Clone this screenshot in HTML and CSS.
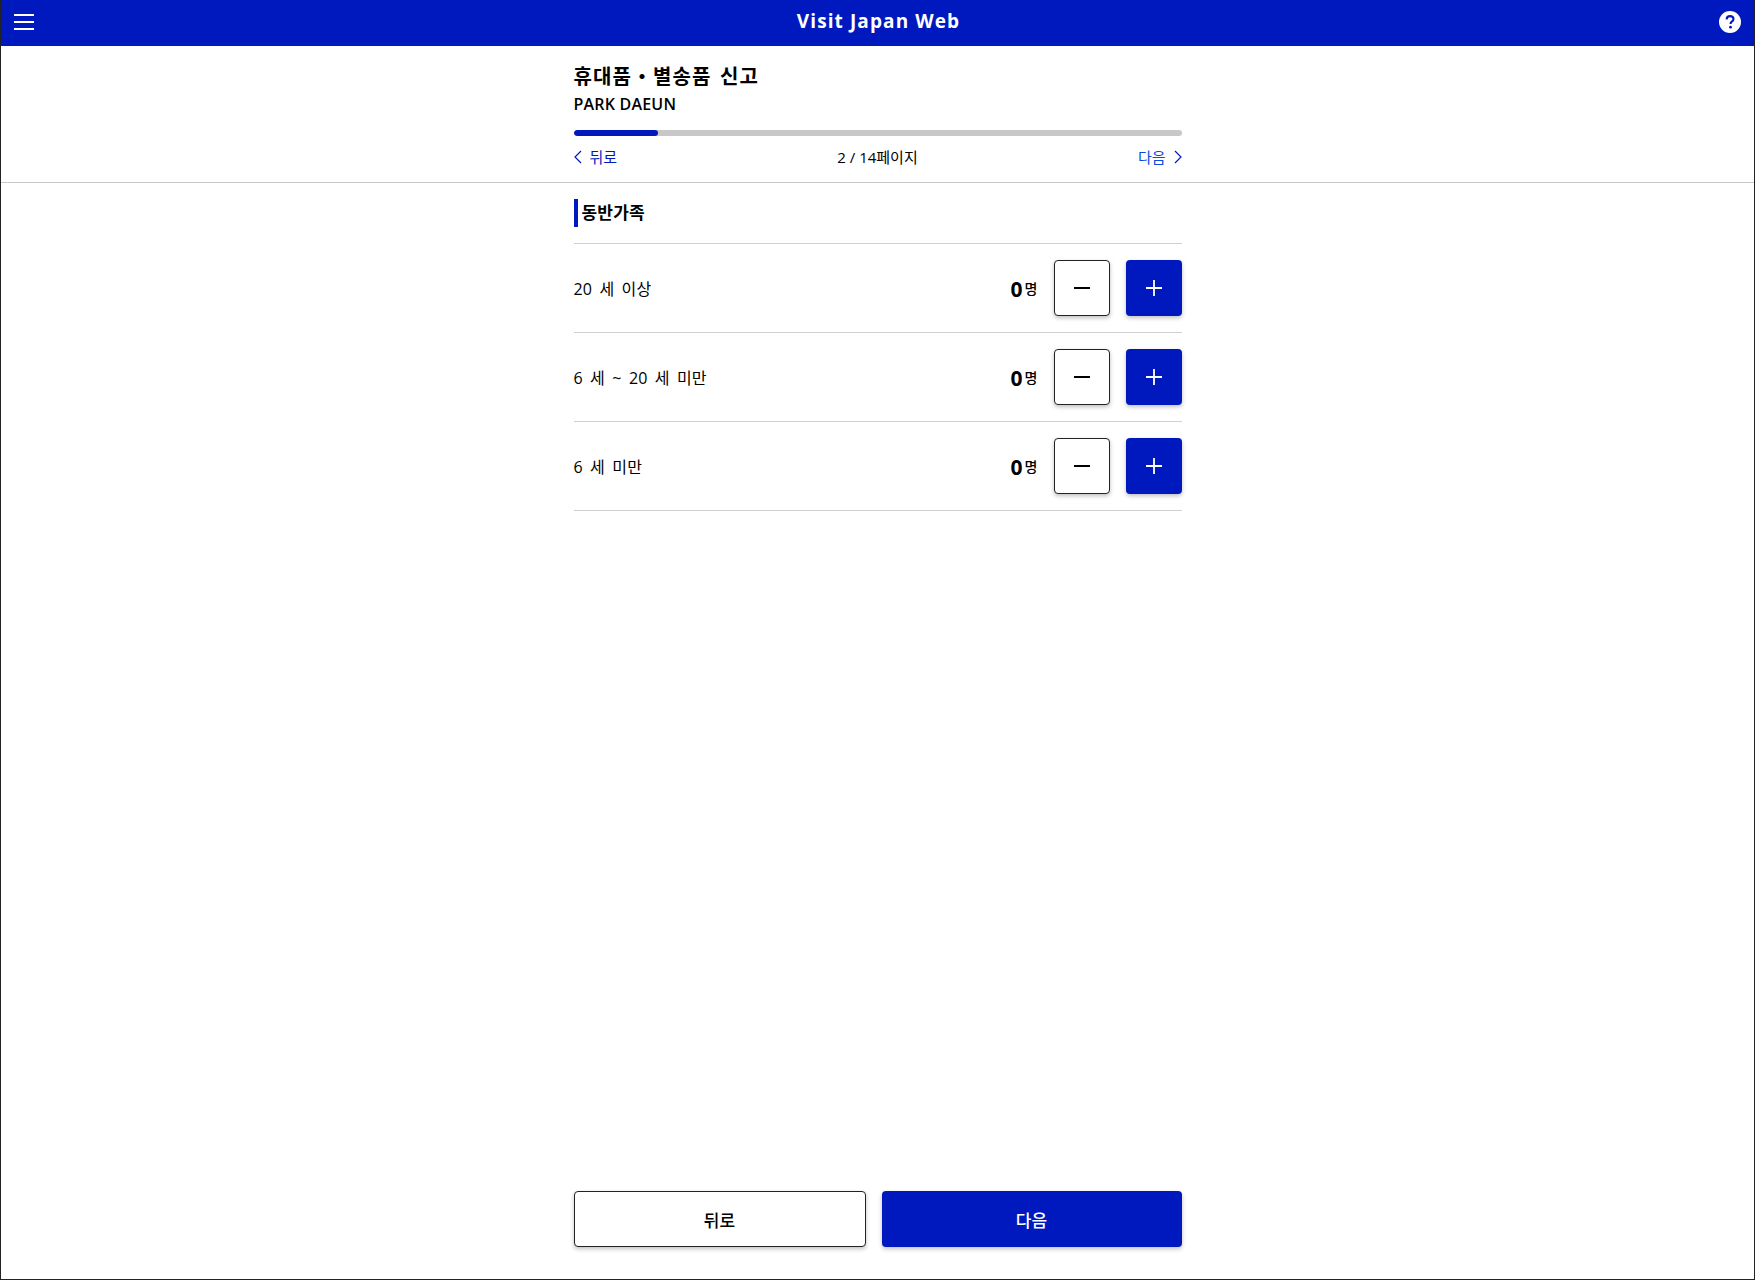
FILE: index.html
```html
<!DOCTYPE html>
<html lang="ko">
<head>
<meta charset="utf-8">
<title>Visit Japan Web</title>
<link rel="stylesheet" href="styles.css">
</head>
<body>
<div class="app">
  <header class="topbar">
    <svg class="menu-icon" width="22" height="18" viewBox="0 0 22 18"><path d="M1 2h20M1 9h20M1 16h20" stroke="#fff" stroke-width="2" fill="none"/></svg>
    <div class="brand">Visit Japan Web</div>
    <svg class="help-icon" width="22" height="22" viewBox="0 0 22 22"><circle cx="11" cy="11" r="11" fill="#fff"/><path d="M7.6 8.4C7.7 6.3 9.1 5.1 11.1 5.1c2 0 3.4 1.2 3.4 2.9 0 1.3-.7 2-1.7 2.7-.9.6-1.2 1-1.2 2v.3" stroke="#0019bf" stroke-width="2.1" fill="none"/><circle cx="11.5" cy="16.2" r="1.4" fill="#0019bf"/></svg>
  </header>
  <section class="subhead">
    <div class="col">
      <h1 class="title">휴대품・별송품 신고</h1>
      <div class="person">PARK DAEUN</div>
      <div class="progress"><div class="progress-fill"></div></div>
      <nav class="pager">
        <a class="pager-link">
          <svg width="8" height="14" viewBox="0 0 8 14"><path d="M7 1 1 7l6 6" stroke="#0019bf" stroke-width="1.2" fill="none"/></svg>
          <span class="gap-l">뒤로</span>
        </a>
        <span class="pager-count">2 / 14페이지</span>
        <a class="pager-link next">
          <span class="gap-r">다음</span>
          <svg width="8" height="14" viewBox="0 0 8 14"><path d="m1 1 6 6-6 6" stroke="#0019bf" stroke-width="1.2" fill="none"/></svg>
        </a>
      </nav>
    </div>
  </section>
  <main class="col main">
    <h2 class="section-title">동반가족</h2>
    <div class="row">
      <span class="row-label">20 세 이상</span>
      <span class="count"><b>0</b><small>명</small></span>
      <button class="step minus"><svg width="16" height="16" viewBox="0 0 16 16"><path d="M0 8h16" stroke="#000" stroke-width="2"/></svg></button>
      <button class="step plus"><svg width="16" height="16" viewBox="0 0 16 16"><path d="M0 8h16M8 0v16" stroke="#fff" stroke-width="1.8"/></svg></button>
    </div>
    <div class="row">
      <span class="row-label">6 세 ~ 20 세 미만</span>
      <span class="count"><b>0</b><small>명</small></span>
      <button class="step minus"><svg width="16" height="16" viewBox="0 0 16 16"><path d="M0 8h16" stroke="#000" stroke-width="2"/></svg></button>
      <button class="step plus"><svg width="16" height="16" viewBox="0 0 16 16"><path d="M0 8h16M8 0v16" stroke="#fff" stroke-width="1.8"/></svg></button>
    </div>
    <div class="row">
      <span class="row-label">6 세 미만</span>
      <span class="count"><b>0</b><small>명</small></span>
      <button class="step minus"><svg width="16" height="16" viewBox="0 0 16 16"><path d="M0 8h16" stroke="#000" stroke-width="2"/></svg></button>
      <button class="step plus"><svg width="16" height="16" viewBox="0 0 16 16"><path d="M0 8h16M8 0v16" stroke="#fff" stroke-width="1.8"/></svg></button>
    </div>
  </main>
  <footer class="col actions">
    <button class="action back">뒤로</button>
    <button class="action forward">다음</button>
  </footer>
</div>
</body>
</html>
```
FILE: styles.css
```css
* { box-sizing: border-box; }
html, body { margin: 0; height: 100%; }
body {
  font-family: "Open Sans", "Noto Sans CJK KR", sans-serif;
  color: #000;
  background: #fff;
}
.app {
  height: 1280px;
  display: flex;
  flex-direction: column;
  border: 1px solid #222;
  border-top: 0;
}
.col { width: 608px; margin: 0 auto; }
.topbar {
  height: 46px;
  flex: none;
  background: #0019bf;
  display: flex;
  align-items: center;
  justify-content: space-between;
  padding: 0 12px 2px;
  position: relative;
}
.brand {
  position: absolute;
  left: 0;
  right: 0;
  top: 0;
  padding-left: 2px;
  text-align: center;
  color: #fff;
  font-size: 19px;
  font-weight: 700;
  letter-spacing: 1.1px;
  line-height: 42px;
}
.help-icon { margin-right: 1px; position: relative; }
.menu-icon { position: relative; }
.subhead {
  flex: none;
  height: 137px;
  border-bottom: 1px solid #c8c8c8;
  padding-top: 17px;
}
.title {
  margin: 0;
  font-size: 20px;
  line-height: 27px;
  font-weight: 700;
  letter-spacing: 1.1px;
  word-spacing: 2px;
}
.person {
  margin-top: 3px;
  font-size: 16px;
  line-height: 22px;
  font-weight: 600;
  letter-spacing: .2px;
}
.progress {
  margin-top: 15px;
  height: 6px;
  border-radius: 3px;
  background: #c8c8c8;
  overflow: hidden;
}
.progress-fill {
  width: 84px;
  height: 6px;
  border-radius: 3px;
  background: #0019bf;
}
.pager {
  margin-top: 11px;
  display: flex;
  align-items: center;
  justify-content: space-between;
  font-size: 15px;
  line-height: 20px;
}
.pager-link {
  display: flex;
  align-items: center;
  color: #0019bf;
  width: 120px;
}
.pager-link.next { justify-content: flex-end; color: #0a4be0; }
.gap-l { margin-left: 8px; }
.gap-r { margin-right: 8px; }
.main { flex: 1; }
.section-title {
  margin: 16px 0 0;
  padding: 0 0 16px 8px;
  box-sizing: content-box;
  height: 28px;
  font-size: 17px;
  font-weight: 600;
  line-height: 28px;
  letter-spacing: .2px;
  border-bottom: 1px solid #d0d0d0;
  position: relative;
  width: 600px;
}
.section-title::before {
  content: "";
  position: absolute;
  left: 0;
  top: 0;
  width: 4px;
  height: 28px;
  background: #0019bf;
}
.row {
  height: 89px;
  display: flex;
  align-items: center;
  border-bottom: 1px solid #d0d0d0;
  padding-bottom: 1px;
}
.row-label {
  flex: 1;
  font-size: 16px;
  word-spacing: 3px;
  letter-spacing: .15px;
}
.count {
  display: flex;
  align-items: baseline;
  margin-right: 16px;
  padding-top: 2px;
}
.count b { font-size: 21px; font-weight: 700; }
.count small { font-size: 14px; margin-left: 2px; font-weight: 500; position: relative; top: -3px; }
.step {
  width: 56px;
  height: 56px;
  padding: 0;
  border-radius: 4px;
  display: flex;
  align-items: center;
  justify-content: center;
  box-shadow: 0 2px 4px rgba(0,0,0,.25);
  cursor: pointer;
}
.minus { background: #fff; border: 1px solid #222; margin-right: 16px; }
.plus { background: #0019bf; border: 0; }
.actions {
  flex: none;
  display: flex;
  gap: 16px;
  padding-bottom: 32px;
}
.action {
  height: 56px;
  border-radius: 4px;
  font-family: inherit;
  font-size: 17px;
  font-weight: 500;
  box-shadow: 0 2px 4px rgba(0,0,0,.25);
}
.back { width: 292px; background: #fff; border: 1px solid #222; color: #000; }
.forward { width: 300px; background: #0019bf; border: 0; color: #fff; }
```
